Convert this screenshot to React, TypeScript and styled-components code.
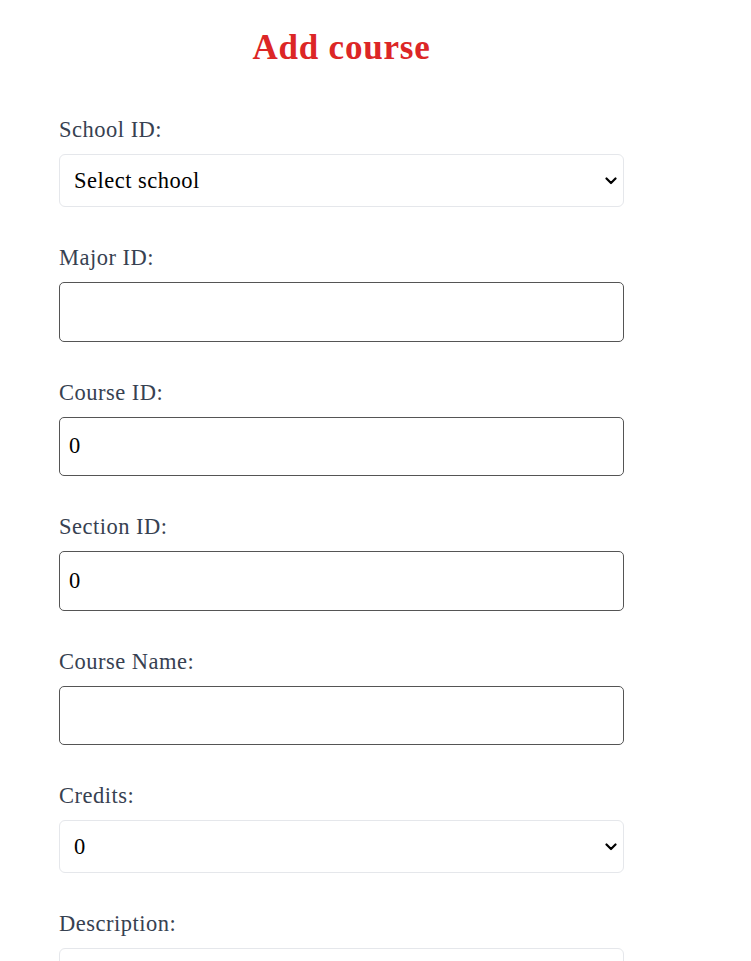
import React from "react";
import styled, { createGlobalStyle } from "styled-components";

const Global = createGlobalStyle`
  html, body { margin: 0; padding: 0; background: #ffffff; }
  body { font-family: "Liberation Serif", "DejaVu Serif", serif; }
  * { box-sizing: border-box; }
`;

const chevron =
  "data:image/svg+xml;utf8," +
  encodeURIComponent(
    '<svg xmlns="http://www.w3.org/2000/svg" width="12" height="8" viewBox="0 0 12 8"><path d="M1.5 1.5 L6 6 L10.5 1.5" fill="none" stroke="#000" stroke-width="2.2" stroke-linecap="round" stroke-linejoin="round"/></svg>'
  );

const Page = styled.div`
  width: 751px;
  display: flex;
  justify-content: flex-start;
  padding: 28px 0 40px 59px;
`;

const Form = styled.form`
  width: 565px;
  display: flex;
  flex-direction: column;
`;

const Title = styled.h1`
  margin: 0 0 49px;
  font-size: 35px;
  line-height: 40px;
  font-weight: bold;
  letter-spacing: 0.8px;
  color: #dc2626;
  text-align: center;
`;

const Field = styled.div`
  display: flex;
  flex-direction: column;
  margin-bottom: 38px;
`;

const Label = styled.label`
  font-size: 22.5px;
  line-height: 26px;
  letter-spacing: 0.5px;
  color: #374151;
  margin-bottom: 11px;
`;

const Select = styled.select`
  width: 100%;
  height: 53px;
  padding: 0 30px 0 14px;
  font-family: "Liberation Serif", "DejaVu Serif", serif;
  font-size: 22.5px;
  letter-spacing: 0.5px;
  color: #000;
  background: #fff url("${chevron}") no-repeat right 6px center / 12px 8px;
  border: 1px solid #e5e7eb;
  border-radius: 6px;
  outline: none;
  appearance: none;
  -webkit-appearance: none;
`;

const Input = styled.input`
  width: 100%;
  height: 59.5px;
  padding: 0 9px;
  font-family: "Liberation Serif", "DejaVu Serif", serif;
  font-size: 22.5px;
  letter-spacing: 0.5px;
  color: #000;
  background: #fff;
  border: 1px solid #555;
  border-radius: 5px;
  outline: none;
`;

const TextArea = styled.textarea`
  width: 100%;
  height: 120px;
  padding: 9px;
  font-family: "Liberation Serif", "DejaVu Serif", serif;
  font-size: 22.5px;
  border: 1px solid #e5e7eb;
  border-radius: 6px;
  resize: vertical;
`;

export default function App() {
  return (
    <Page>
      <Global />
      <Form onSubmit={(e) => e.preventDefault()}>
        <Title>Add course</Title>
        <Field>
          <Label>School ID:</Label>
          <Select defaultValue="">
            <option value="">Select school</option>
          </Select>
        </Field>
        <Field>
          <Label>Major ID:</Label>
          <Input type="text" />
        </Field>
        <Field>
          <Label>Course ID:</Label>
          <Input type="number" defaultValue={0} />
        </Field>
        <Field>
          <Label>Section ID:</Label>
          <Input type="number" defaultValue={0} />
        </Field>
        <Field>
          <Label>Course Name:</Label>
          <Input type="text" />
        </Field>
        <Field>
          <Label>Credits:</Label>
          <Select defaultValue="0">
            <option value="0">0</option>
            <option value="1">1</option>
            <option value="2">2</option>
            <option value="3">3</option>
            <option value="4">4</option>
          </Select>
        </Field>
        <Field>
          <Label>Description:</Label>
          <TextArea />
        </Field>
      </Form>
    </Page>
  );
}
